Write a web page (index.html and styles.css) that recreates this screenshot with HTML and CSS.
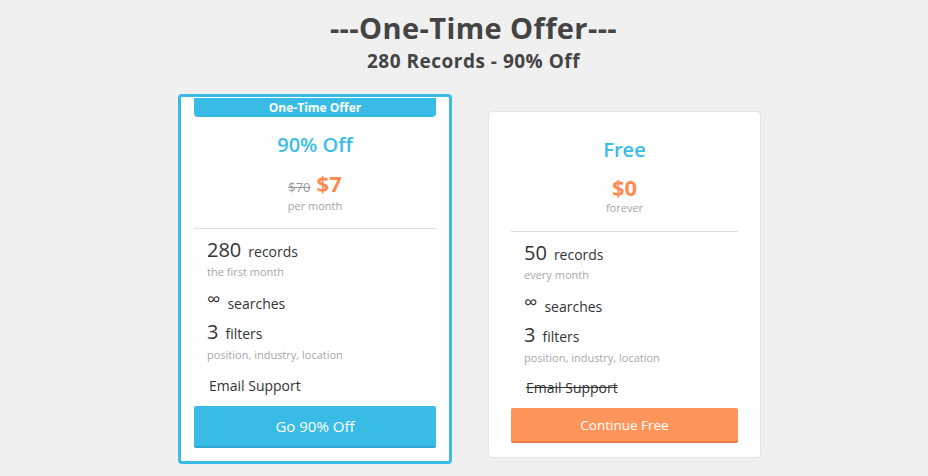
FILE: index.html
```html
<!DOCTYPE html>
<html lang="en">
<head>
<meta charset="utf-8">
<title>One-Time Offer</title>
<link rel="stylesheet" href="styles.css">
</head>
<body>
<div class="page">
  <header class="head">
    <h1 class="title">---One-Time Offer---</h1>
    <h2 class="subtitle">280 Records - 90% Off</h2>
  </header>
  <div class="plans">
    <section class="card card-offer">
      <div class="badge">One-Time Offer</div>
      <div class="plan-name">90% Off</div>
      <div class="price-row"><span class="old-price">$70</span><span class="price">$7</span></div>
      <div class="period">per month</div>
      <hr class="sep">
      <ul class="features">
        <li class="feat-main"><span class="num">280</span><span class="label">records</span></li>
        <li class="feat-note">the first month</li>
        <li class="feat-inf"><span class="inf">∞</span><span class="label">searches</span></li>
        <li class="feat-main feat-filters"><span class="num">3</span><span class="label">filters</span></li>
        <li class="feat-note feat-note2">position, industry, location</li>
        <li class="feat-support">Email Support</li>
      </ul>
      <button class="btn btn-blue">Go 90% Off</button>
    </section>
    <section class="card card-free">
      <div class="plan-name">Free</div>
      <div class="price-row"><span class="price">$0</span></div>
      <div class="period period-free">forever</div>
      <hr class="sep sep-free">
      <ul class="features">
        <li class="feat-main feat-first-free"><span class="num">50</span><span class="label">records</span></li>
        <li class="feat-note">every month</li>
        <li class="feat-inf"><span class="inf">∞</span><span class="label">searches</span></li>
        <li class="feat-main feat-filters"><span class="num">3</span><span class="label">filters</span></li>
        <li class="feat-note feat-note2">position, industry, location</li>
        <li class="feat-support struck">Email Support</li>
      </ul>
      <button class="btn btn-orange">Continue Free</button>
    </section>
  </div>
</div>
</body>
</html>
```
FILE: styles.css
```css
* { box-sizing: border-box; }
html, body { margin: 0; padding: 0; }
body {
  background: #f0f0f0;
  font-family: "Open Sans", "DejaVu Sans", sans-serif;
  color: #333;
}
.page {
  padding-left: 19px;
}
.head {
  text-align: center;
  padding-top: 10px;
}
.title {
  margin: 0;
  font-size: 29px;
  line-height: 36px;
  font-weight: 700;
  letter-spacing: 0.4px;
  color: #444;
}
.subtitle {
  margin: 3px 0 0;
  font-size: 19px;
  line-height: 24px;
  font-weight: 700;
  letter-spacing: 0.5px;
  color: #444;
}
.plans {
  display: flex;
  justify-content: center;
  align-items: flex-start;
  gap: 36px;
  margin-top: 21px;
  padding-right: 8px;
}
.card {
  background: #fff;
  text-align: center;
}
.card-offer {
  width: 274px;
  border: 3px solid #38bce6;
  border-radius: 4px;
  padding: 0 13px 13px;
}
.card-free {
  width: 273px;
  margin-top: 17px;
  border: 1px solid #e4e4e4;
  border-radius: 4px;
  padding: 24px 22px 14px;
}
.badge {
  margin-top: 1px;
  height: 19px;
  line-height: 19px;
  background: #38bce6;
  color: #fff;
  font-size: 12px;
  font-weight: 700;
  border-radius: 0 0 4px 4px;
}
.plan-name {
  margin-top: 14px;
  font-size: 20px;
  line-height: 28px;
  font-weight: 600;
  color: #3bbde8;
}
.card-free .plan-name { margin-top: 0; }
.price-row {
  margin-top: 10px;
  line-height: 28px;
  display: flex;
  justify-content: center;
  align-items: baseline;
  gap: 6px;
}
.card-free .price-row { margin-top: 9px; }
.old-price {
  font-size: 13px;
  color: #9a9a9a;
  text-decoration: line-through;
}
.price {
  font-size: 22px;
  font-weight: 700;
  color: #ff8b4f;
}
.period {
  margin-top: -2px;
  font-size: 11px;
  line-height: 14px;
  color: #a4a4a4;
}
.period-free { margin-top: 0; }
.sep {
  margin: 15px 0 0;
  border: 0;
  height: 1px;
  background: #e2ddd6;
}
.sep-free { margin-top: 16px; }
.features {
  list-style: none;
  margin: 0;
  padding: 0 0 0 13px;
  text-align: left;
}
.feat-main {
  margin-top: 8px;
  line-height: 26px;
  display: flex;
  align-items: baseline;
  gap: 7px;
}
.feat-first-free { margin-top: 8px; }
.num {
  font-size: 20px;
  color: #333;
}
.label {
  font-size: 14px;
  color: #333;
}
.feat-note {
  margin-top: 0;
  font-size: 11px;
  line-height: 14px;
  color: #a8a8a8;
}
.feat-inf {
  margin-top: 13px;
  line-height: 24px;
  display: flex;
  align-items: baseline;
  gap: 7px;
}
.inf {
  font-size: 19px;
  line-height: 20px;
  position: relative;
  top: -3px;
  color: #333;
}
.feat-filters { margin-top: 3px; }
.feat-note2 { margin-top: 1px; }
.feat-support {
  margin-top: 14px;
  padding-left: 2px;
  font-size: 14px;
  line-height: 20px;
  color: #333;
}
.card-free .feat-support { margin-top: 13px; }
.struck { text-decoration: line-through; }
.btn {
  display: block;
  width: 100%;
  border: 0;
  border-radius: 2px;
  color: #fff;
  font-family: "Open Sans", "DejaVu Sans", sans-serif;
  cursor: pointer;
}
.btn-blue {
  margin-top: 10px;
  height: 42px;
  font-size: 15px;
  background: #38bce6;
  border-bottom: 2px solid #2fa6cd;
}
.btn-orange {
  margin-top: 10px;
  height: 35px;
  font-size: 13.5px;
  background: #ff955b;
  border-bottom: 2px solid #e57e45;
}
```
